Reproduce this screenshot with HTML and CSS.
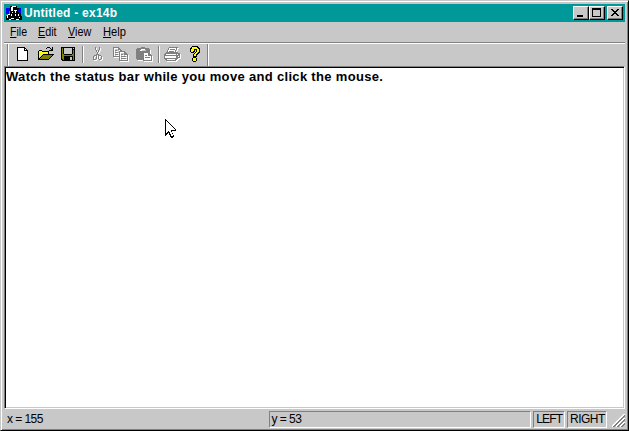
FILE: index.html
```
<!DOCTYPE html>
<html lang="en">
<head>
<meta charset="utf-8">
<title>Untitled - ex14b</title>
<link rel="stylesheet" href="styles.css">
</head>
<body>
<div class="window">
  <header class="titlebar">
    <svg class="appicon" viewBox="0 0 16 16" width="16" height="16">
      <path fill="#00f" d="M0 3h3v6H0zM12 3h3v6h-3z"/>
      <path fill="#000" d="M4 1h7v2h2v6h2v2h1v4H0v-4h2V9h2V6H3V3h1z"/>
      <path fill="#fff" d="M6 1h4v1H6zM5 2h2v4H5zM8 5h3v1H8zM9 6h1v2H9zM6 7h1v1H6zM2 9h2v1H2zM1 10h1v3H1zM5 9h1v2H5zM5 13h3v1H5zM9 9h1v2H9zM12 9h1v2h-1zM13 12h1v1h-1zM3 14h2v1H3zM10 14h3v1h-3z"/>
      <path fill="#00f" d="M3 3h1v3H3zM12 4h1v3h-1z"/>
    </svg>
    <h1 class="title"><span>Untitled - ex14b</span></h1>
    <div class="controls">
      <button class="ctl" aria-label="Minimize"><svg width="12" height="10" viewBox="0 0 12 10"><path d="M2 7h6v2H2z"/></svg></button>
      <button class="ctl" aria-label="Maximize"><svg width="12" height="10" viewBox="0 0 12 10"><path fill-rule="evenodd" d="M1 0h9v9H1zM2 2v6h7V2z"/></svg></button>
      <button class="ctl close" aria-label="Close"><svg width="12" height="10" viewBox="0 0 12 10"><path d="M2 1h2v1h1v1h2V2h1V1h2v1H9v1H8v1H7v1h1v1h1v1h1v1H8V7H7V6H5v1H4v1H2V7h1V6h1V5h1V4H4V3H3V2H2z"/></svg></button>
    </div>
  </header>
  <nav class="menu">
    <span class="m-file"><u>F</u>ile</span><span class="m-edit"><u>E</u>dit</span><span class="m-view"><u>V</u>iew</span><span class="m-help"><u>H</u>elp</span>
  </nav>
  <div class="toolbar">
    <i class="grip"></i>
    <svg class="tool new" width="16" height="16" viewBox="0 0 16 16"><path d="M2 1h8v1h1v1h1v1h1v11H2z"/><path fill="#fff" d="M3 2h6v3h3v9H3zM10 3h1v1h-1z"/></svg>
    <svg class="tool" width="16" height="16" viewBox="0 0 16 16"><path d="M9 1h3v1H9zM8 2h1v1H8zM12 2h1v1h-1zM14 1h1v4h-4V4h2V3h1zM1 4h3v1H1zM0 5h1v9H0zM4 5h7v3h-1V6H4zM5 8h11v1h-1v1h-1v1h-1v1h-1v1h-1v1H0v-1h1v-1h1v-1h1v-1h1V9h1z"/><path fill="#ff0" d="M1 5h3v1h6v2H4v1H3v1H2v1H1z"/><path fill="#808000" d="M5 9h9v1h-1v1h-1v1h-1v1H2v-1h1v-1h1v-1h1z"/></svg>
    <svg class="tool save" width="16" height="16" viewBox="0 0 16 16"><path d="M1 1h14v14H2v-1H1z"/><path fill="#808000" d="M2 2h1v6h1v1h8V8h1V4h1v10h-1v-4H4v4H3v-1H2z"/><path fill="#c8c8c8" d="M4 2h8v6H4zM13 2h1v1h-1zM10 11h2v3h-2z"/></svg>
    <i class="sep"></i>
    <svg class="tool off" width="16" height="16" viewBox="0 0 16 16"><defs><path id="cut" d="M5 1h1v3H5zM9 1h1v3H9zM6 4h1v2H6zM8 4h1v2H8zM7 6h1v3H7zM6 8h1v2H6zM8 8h1v2H8zM4 9h2v1H4zM3 10h1v4H3zM6 10h1v3H6zM4 14h2v-1H4zM9 9h2v1H9zM8 10h1v3H8zM11 10h1v3h-1zM9 13h2v1H9z"/></defs><use href="#cut" class="hi" x="1" y="1"/><use href="#cut"/></svg>
    <svg class="tool off" width="17" height="16" viewBox="0 0 17 16"><defs><path id="copy" fill-rule="evenodd" d="M0 1h6v1h1v1h1v1h1v1H6v6H0zM1 2v8h5V5h1V4H5V2zM2 4h2v1H2zM2 6h3v1H2zM2 8h3v1H2zM6 5h6v1h1v1h1v1h1v7H6zM7 6v8h7V9h-3V6zM8 8h2v1H8zM8 10h5v1H8zM8 12h5v1H8z"/></defs><use href="#copy" class="hi" x="1" y="1"/><use href="#copy"/></svg>
    <svg class="tool off paste" width="17" height="16" viewBox="0 0 17 16"><defs><path id="paste" fill-rule="evenodd" d="M1 2h4V1h4v1h4v1h1v4h-1v7H1v-1H0V3h1zM4 4v1h6V4H9V3H5v1z"/></defs><use href="#paste" class="hi" x="1" y="1"/><use href="#paste"/><path class="hi" d="M8 7h5v2h2v1h2v6H8z"/><path fill-rule="evenodd" d="M7 6h6v1h1v1h1v1h1v6H7zM8 7v7h7v-4h-3V7zM9 9h2v1H9zM9 11h5v1H9z"/></svg>
    <i class="sep"></i>
    <svg class="tool off print" width="17" height="16" viewBox="0 0 17 16"><defs><path id="print" fill-rule="evenodd" d="M5 1h9v1h-1v2h-1v2h2v1h2v5h-2v1h-1v1h-1v1H2v-1H1v-1H0V8h1V7h1V6h1V4h1V2h1zM5 2v2H4v2h7V4h1V2zM2 8v1h10V8zM1 10v2h11v-2zM3 13v1h8v-1zM13 8v1h1V8zM14 10v1h1v-1zM6 3h5v1H6zM5 5h5v1H5z"/></defs><use href="#print" class="hi" x="1" y="1"/><path class="hi" d="M5 2h7v2h-1v2H4V4h1zM2 8h10v1H2zM1 10h11v2H1z"/><use href="#print"/></svg>
    <svg class="tool help" width="16" height="16" viewBox="0 0 16 16"><path d="M5 0h6v1h1v1h1v5h-1v1h-1v1h-1v2h-1v1h1v3h-1v1H6v-1H5v-3h1V8h1V7h1V6h1V4H8v2H7v1H4V6H3V2h1V1h1z"/><path fill="#ff0" d="M5 1h5v1h1v1h1v3h-1v1h-1v1H9v2H7V8h1V7h1V6h1V3H7v2H6v1H4V3h1zM6 12h3v3H6z"/></svg>
    <i class="end"></i>
  </div>
  <main class="client"><p class="message">Watch the status bar while you move and click the mouse.</p>
    <svg class="cursor" width="12" height="20" viewBox="0 0 12 20"><path d="M0 0h1v1h1v1h1v1h1v1h1v1h1v1h1v1h1v1h1v1h1v1h1v2H7v2h1v2h1v2h-1v1H6v-1H5v-2H4v-2H3v1H2v1H1v1H0z"/><path fill="#fff" d="M1 2h1v1h1v1h1v1h1v1h1v1h1v1h1v1h1v1h1v1H6v2h1v2h1v2H6v-2H5v-2H4v-1H3v1H2v1H1z"/></svg>
  </main>
  <footer class="status">
    <span class="pane first">x = 155</span><span class="pane wide">y = 53</span><span class="pane left">LEFT</span><span class="pane right">RIGHT</span>
    <svg class="sizer" width="13" height="13" viewBox="0 0 13 13"><path stroke="#fff" d="M0 12.500L12.500 0M4 12.500L12.500 4M8 12.500L12.500 8"/><path stroke="#808080" stroke-width="1.500" d="M1.500 13L13 1.500M5.500 13L13 5.500M9.500 13L13 9.500"/></svg>
  </footer>
</div>
</body>
</html>
```
FILE: styles.css
```
* { box-sizing: border-box; }
body { margin: 0; font: 12px/14px "Liberation Sans", Arial, sans-serif; color: #000; }
svg { display: block; shape-rendering: crispEdges; flex: none; }
.window {
  width: 629px; height: 431px; padding: 3px 3px 2px;
  display: flex; flex-direction: column; background: #c8c8c8;
  border: 1px solid; border-color: #c8c8c8 #000 #000 #c8c8c8;
  box-shadow: inset 1px 1px #fff, inset -1px -1px #808080;
}
.titlebar { height: 18px; background: #009898; display: flex; align-items: center; padding: 0 2px; flex: none; }
.title { margin: 0 0 0 2px; flex: 1; color: #fff; font-size: 12px; line-height: 18px; font-weight: bold; letter-spacing: .25px; white-space: nowrap; }
.controls { display: flex; }
.ctl {
  width: 16px; height: 14px; padding: 1px; background: #c8c8c8; border: 1px solid; border-color: #fff #000 #000 #fff;
  box-shadow: inset -1px -1px #808080; border-radius: 0;
}
.close { margin-left: 2px; }
.menu { height: 20px; flex: none; display: flex; padding: 3px 6px; }
.menu span { white-space: nowrap; transform-origin: 0 0; }
.menu u { text-underline-offset: 1px; text-decoration-thickness: 1px; }
.m-file { width: 28px; transform: scaleX(.88); }
.m-edit { width: 30px; transform: scaleX(.9); }
.m-view { width: 35px; transform: scaleX(.9); }
.m-help { transform: scaleX(.93); }
.toolbar { height: 24px; flex: none; display: flex; border-top: 1px solid #808080; box-shadow: inset 0 1px #fff; padding: 0 0 0 3px; align-items: flex-start; }
.tool { margin: 3px 7px 0 0; }
.new { margin-left: 6px; }
.save { margin-left: -1px; }
.grip, .end { width: 2px; height: 23px; margin-top: 1px; border-left: 1px solid #808080; border-right: 1px solid #fff; }
.sep { width: 2px; height: 17px; margin: 3px 6px 0 -1px; border-left: 1px solid #808080; border-right: 1px solid #fff; }
.off { fill: #808080; }
.hi { fill: #fff; }
.paste { margin-left: -1px; margin-right: 6px; }
.print { margin-left: -2px; }
.help { margin-left: -1px; margin-right: 4px; }
.client { flex: 1; background: #fff; border: 1px solid; border-color: #808080 #fff #fff #808080; box-shadow: inset 1px 1px #000, inset -1px -1px #c8c8c8; padding: 2px 1px; position: relative; }
.message { margin: 0; font: bold 13px/16px "Liberation Sans", Arial, sans-serif; letter-spacing: .32px; white-space: nowrap; }
.cursor { position: absolute; left: 160px; top: 52px; }
.status { height: 19px; flex: none; display: flex; padding-top: 2px; }
.pane { height: 17px; line-height: 15px; border: 1px solid; border-color: #808080 #fff #fff #808080; padding-left: 2px; white-space: nowrap; font-size: 12px; letter-spacing: -.55px; }
.first { width: 263px; border-color: transparent; margin-right: 2px; }
.wide { width: 263px; margin-right: 2px; }
.left { width: 32px; margin-right: 2px; letter-spacing: -.8px; }
.right { width: 40px; margin-right: 5px; }
.sizer { margin-top: 3px; }
```
